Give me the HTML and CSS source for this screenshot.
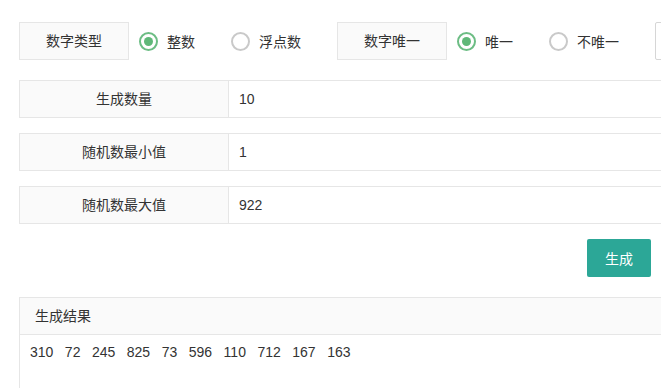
FILE: index.html
```html
<!DOCTYPE html>
<html>
<head>
    <meta charset="UTF-8">
    <meta name="viewport" content="width=device-width, initial-scale=1.0">
    <title>随机数生成</title>
    <link rel="stylesheet" href="styles.css">
</head>
<body>
    <div class="page">
        <div class="option-row">
            <div class="option-label">数字类型</div>
            <div class="radio checked">
                <span class="radio-icon"></span>
                <span>整数</span>
            </div>
            <div class="radio">
                <span class="radio-icon"></span>
                <span>浮点数</span>
            </div>

            <div class="option-label">数字唯一</div>
            <div class="radio checked">
                <span class="radio-icon"></span>
                <span>唯一</span>
            </div>
            <div class="radio">
                <span class="radio-icon"></span>
                <span>不唯一</span>
            </div>

            <div class="option-select"></div>
        </div>

        <div class="field-row">
            <div class="field-label">生成数量</div>
            <div class="field-value">10</div>
        </div>
        <div class="field-row">
            <div class="field-label">随机数最小值</div>
            <div class="field-value">1</div>
        </div>
        <div class="field-row">
            <div class="field-label">随机数最大值</div>
            <div class="field-value">922</div>
        </div>

        <div class="actions">
            <button class="btn">生成</button>
        </div>

        <div class="result">
            <div class="result-head">生成结果</div>
            <div class="result-body">
                <span>310</span><span>72</span><span>245</span><span>825</span><span>73</span><span>596</span><span>110</span><span>712</span><span>167</span><span>163</span>
            </div>
        </div>
    </div>
</body>
</html>
```

FILE: styles.css
```css
* {
    margin: 0;
    padding: 0;
    box-sizing: border-box;
}

body {
    font-family: "Liberation Sans", "Noto Sans CJK SC", sans-serif;
    font-size: 14px;
    color: #333;
    background: #fff;
    overflow: hidden;
}

.page {
    width: 900px;
    padding: 22px 0 0 19px;
}

.option-row {
    display: flex;
    align-items: center;
    height: 38px;
}

.option-label {
    width: 110px;
    height: 38px;
    line-height: 36px;
    text-align: center;
    background: #fafafa;
    border: 1px solid #e6e6e6;
    margin-right: 10px;
}

.radio {
    display: flex;
    align-items: center;
    gap: 9px;
    margin-right: 36px;
}

.radio-icon {
    width: 19px;
    height: 19px;
    border: 2px solid #c9c9c9;
    border-radius: 50%;
    display: flex;
    align-items: center;
    justify-content: center;
}

.radio.checked .radio-icon {
    border-color: #6cbd84;
}

.radio.checked .radio-icon::after {
    content: "";
    width: 9px;
    height: 9px;
    border-radius: 50%;
    background: #5fb878;
}

.option-select {
    width: 160px;
    height: 38px;
    border: 1px solid #d6d6d6;
    border-radius: 2px;
}

.field-row {
    display: flex;
    width: 860px;
    height: 38px;
    margin-top: 15px;
    border: 1px solid #e6e6e6;
}

.option-row + .field-row {
    margin-top: 20px;
}

.field-label {
    width: 209px;
    line-height: 36px;
    text-align: center;
    background: #fafafa;
    border-right: 1px solid #e6e6e6;
}

.field-value {
    flex: 1;
    line-height: 36px;
    padding-left: 10px;
}

.actions {
    width: 632px;
    display: flex;
    justify-content: flex-end;
    margin-top: 15px;
}

.btn {
    width: 64px;
    height: 38px;
    border: none;
    border-radius: 2px;
    background: #2ca797;
    color: #fff;
    font-family: inherit;
    font-size: 14px;
}

.result {
    width: 860px;
    margin-top: 20px;
    border: 1px solid #e6e6e6;
    height: 120px;
}

.result-head {
    height: 37px;
    line-height: 36px;
    padding-left: 15px;
    background: #fafafa;
    border-bottom: 1px solid #e6e6e6;
}

.result-body {
    padding: 7px 10px;
    line-height: 20px;
}

.result-body span {
    margin-right: 11.5px;
}
```
